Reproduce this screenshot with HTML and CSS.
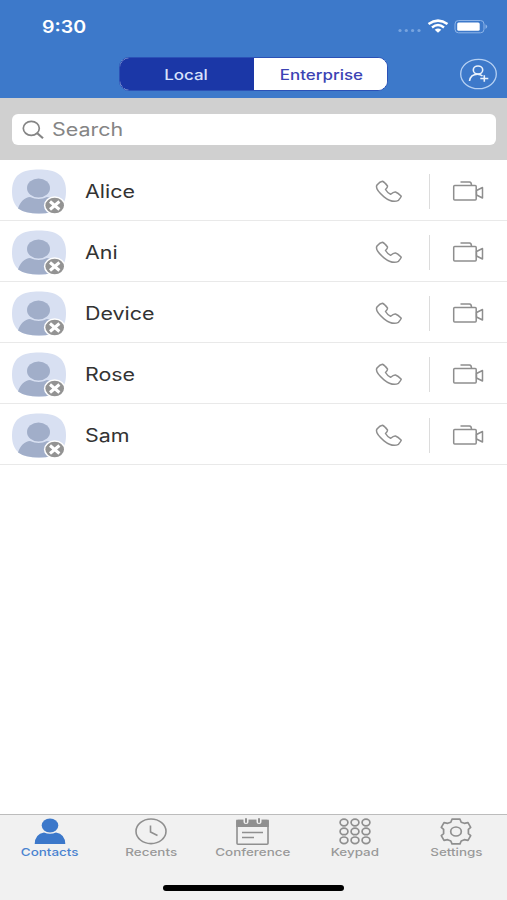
FILE: index.html
```html
<!DOCTYPE html>
<html lang="en">
<head>
<meta charset="utf-8">
<title>Contacts</title>
<link rel="stylesheet" href="styles.css">
</head>
<body>
<svg class="defs" width="0" height="0" aria-hidden="true">
  <symbol id="avatar" viewBox="0 0 56 46">
    <path d="M27 .5C43 .5 54 5 54 22.500S43 44.500 27 44.500S0 40 0 22.500S11 .5 27 .5Z" fill="#d8e0f2"/>
    <ellipse cx="26.500" cy="19" rx="11.500" ry="9.500" fill="#a1aec9"/>
    <path d="M6 39.500C8 33 13 28 18 28Q27 32 35 28Q43 29 48 39Q41 44.500 27 44.500T6 39.500Z" fill="#a1aec9"/>
    <ellipse cx="42.700" cy="36.500" rx="10.800" ry="9.300" fill="#fff"/>
    <ellipse cx="42.700" cy="36.500" rx="9.300" ry="7.800" fill="#939393"/>
    <path d="M38 32.500l9.400 8M47.400 32.500l-9.400 8" stroke="#fff" stroke-width="3"/>
  </symbol>
  <symbol id="phone" viewBox="0 0 28 24">
    <path d="M2 5Q5 1.500 7.500 1.300Q9.500 2 12.500 6Q12.700 7.500 10.500 9.500Q12 12.300 15.700 14.300Q18.500 11.700 20.500 12Q23 12.800 26.300 16.200Q26 17.500 23.500 20.300Q17.500 23.500 9 16.800Q-.5 9 2 5Z" fill="none" stroke="#8e8e8e" stroke-width="1.500" stroke-linejoin="round"/>
  </symbol>
  <symbol id="video" viewBox="0 0 32 22">
    <g fill="none" stroke="#8e8e8e" stroke-width="1.500" stroke-linejoin="round">
      <rect x="1.700" y="4.500" width="22.500" height="14.500" rx="1"/>
      <path d="M8.500 1H17.500Q19.500 1 19.500 4.500M24.500 9.500L30.500 6.500V17L24.500 14Z"/>
    </g>
  </symbol>
</svg>
<div class="screen">
  <header class="header">
    <div class="status">
      <span class="time wide">9:30</span>
      <svg class="status-icons" width="94" height="18" viewBox="0 0 94 18">
        <g fill="#78a4df"><circle cx="5" cy="12.500" r="1.600"/><circle cx="11.300" cy="12.500" r="1.600"/><circle cx="17.600" cy="12.500" r="1.600"/><circle cx="24" cy="12.500" r="1.600"/></g>
        <g fill="none" stroke="#fff" stroke-width="2.500"><path d="M33.500 6Q43 -.8 52.500 6M37 9.400Q43 4.700 49 9.400"/></g>
        <path d="M39.700 11.700Q43 9.200 46.300 11.700L43 14.700Z" fill="#fff"/>
        <rect x="60" y="2.500" width="29" height="12.300" rx="3.500" fill="none" stroke="#8db4e8"/>
        <rect x="62.200" y="4.500" width="22.500" height="8.200" rx="1.500" fill="#fff"/>
        <path d="M90.500 6.300q3.500 2.300 0 4.600z" fill="#8db4e8"/>
      </svg>
    </div>
    <div class="toolbar">
      <div class="segments">
        <button class="segment selected"><span class="wide">Local</span></button>
        <button class="segment"><span class="wide">Enterprise</span></button>
      </div>
      <svg class="add" width="38" height="32" viewBox="0 0 38 32">
        <g fill="none" stroke="#b5d0f3" stroke-width="1.300"><ellipse cx="19.500" cy="16" rx="17.800" ry="14.700"/></g>
        <g fill="none" stroke="#eaf2fc" stroke-width="1.600"><ellipse cx="19" cy="12" rx="4.700" ry="4"/><path d="M10.500 23Q11.500 16.300 18.500 16.300Q21.500 16.300 23.500 18M25.300 17.200v6.600M21.300 20.500h8"/></g>
      </svg>
    </div>
  </header>
  <div class="search-bar">
    <div class="search-box">
      <svg width="24" height="20" viewBox="0 0 24 20" fill="none" stroke="#858585" stroke-width="1.700"><ellipse cx="9.300" cy="8.300" rx="8" ry="7"/><path d="M15 13l6 5.300" stroke-width="2.200"/></svg>
      <span class="wide">Search</span>
    </div>
  </div>
  <main class="contacts">
    <div class="contact"><svg class="avatar"><use href="#avatar"/></svg><span class="name wide">Alice</span><svg class="phone"><use href="#phone"/></svg><i class="rule"></i><svg class="video"><use href="#video"/></svg></div>
    <div class="contact"><svg class="avatar"><use href="#avatar"/></svg><span class="name wide">Ani</span><svg class="phone"><use href="#phone"/></svg><i class="rule"></i><svg class="video"><use href="#video"/></svg></div>
    <div class="contact"><svg class="avatar"><use href="#avatar"/></svg><span class="name wide">Device</span><svg class="phone"><use href="#phone"/></svg><i class="rule"></i><svg class="video"><use href="#video"/></svg></div>
    <div class="contact"><svg class="avatar"><use href="#avatar"/></svg><span class="name wide">Rose</span><svg class="phone"><use href="#phone"/></svg><i class="rule"></i><svg class="video"><use href="#video"/></svg></div>
    <div class="contact"><svg class="avatar"><use href="#avatar"/></svg><span class="name wide">Sam</span><svg class="phone"><use href="#phone"/></svg><i class="rule"></i><svg class="video"><use href="#video"/></svg></div>
  </main>
  <footer class="footer">
    <nav class="tabs">
      <div class="tab active">
        <svg width="36" height="30" viewBox="0 0 36 30"><ellipse cx="18" cy="8.500" rx="8.300" ry="7" fill="#3c78ca"/><path d="M2.700 27Q3 17 12 15.500Q18 18 24 15.500Q33 17 33.300 27Z" fill="#3c78ca"/></svg>
        <span class="wide">Contacts</span>
      </div>
      <div class="tab">
        <svg width="36" height="30" viewBox="0 0 36 30" fill="none" stroke="#8f8f8f" stroke-width="1.600"><ellipse cx="18" cy="14.300" rx="15" ry="12.300"/><path d="M17.500 8.500V15L24.500 18.500"/></svg>
        <span class="wide">Recents</span>
      </div>
      <div class="tab">
        <svg width="36" height="30" viewBox="0 0 36 30" fill="none" stroke="#8f8f8f" stroke-width="1.600"><rect x="2" y="3.500" width="31" height="23.700" rx="1"/><path d="M1.200 2.700h32.600v7.300H1.200z" fill="#8f8f8f" stroke="none"/><g stroke-linecap="round"><path d="M11 2v2.500M24 2v2.500" stroke="#f1f1f1" stroke-width="5"/><path d="M11 2v3M24 2v3" stroke-width="2"/></g><path d="M7 15.500h21M7 20.500h12"/></svg>
        <span class="wide">Conference</span>
      </div>
      <div class="tab">
        <svg width="36" height="30" viewBox="0 0 36 30" fill="none" stroke="#8f8f8f" stroke-width="1.700"><g id="keys"><ellipse cx="7" cy="5.500" rx="3.900" ry="3.300"/><ellipse cx="18" cy="5.500" rx="3.900" ry="3.300"/><ellipse cx="29" cy="5.500" rx="3.900" ry="3.300"/></g><use href="#keys" y="8.900"/><use href="#keys" y="17.800"/></svg>
        <span class="wide">Keypad</span>
      </div>
      <div class="tab">
        <svg width="36" height="30" viewBox="0 0 36 30" fill="none" stroke="#8f8f8f" stroke-width="1.700" stroke-linejoin="round"><path d="M14 2.200H22L23.200 5.200L26.300 6.300L30 5.600L32.700 10.300L30.400 12.300V16.700L32.700 18.700L30 23.400L26.300 22.700L23.200 24L22 26.800H14L12.800 24L9.700 22.700L6 23.400L3.300 18.700L5.600 16.700V12.300L3.300 10.300L6 5.600L9.700 6.300L12.800 5.200Z"/><ellipse cx="18" cy="14.500" rx="5.300" ry="4.500"/></svg>
        <span class="wide">Settings</span>
      </div>
    </nav>
    <div class="home"></div>
  </footer>
</div>
</body>
</html>
```
FILE: styles.css
```css
* { box-sizing: border-box; }
body { margin: 0; font-family: Inter, "Liberation Sans", sans-serif; background: #fff; }
.defs { position: absolute; }
.screen { width: 507px; height: 900px; display: flex; flex-direction: column; overflow: hidden; }
.wide { display: inline-block; transform: scaleX(1.19); }
svg { display: block; flex: none; }

.header { height: 98px; background: #3d79ca; }
.status { height: 54px; padding: 0 18px 0 42px; display: flex; align-items: center; justify-content: space-between; }
.time { color: #fff; font-size: 17px; font-weight: 600; transform: scaleX(1.15); transform-origin: left; }
.toolbar { height: 40px; padding: 0 10px 0 119px; display: flex; align-items: center; justify-content: space-between; }
.segments { display: flex; width: 269px; height: 34px; border: 1px solid #2b51b6; border-radius: 10px; overflow: hidden; background: #fff; }
.segment { flex: 1; padding: 0 0 0 2px; border: 0; background: #fff; color: #3c43b4; font: 500 14px Inter, sans-serif; }
.segment .wide { transform: scaleX(1.21); }
.segment.selected { padding: 0 2px 0 0; background: #1b37a7; color: #d9e2fb; }

.search-bar { height: 62px; padding: 16px 11px 15px 12px; background: #d0d0d0; }
.search-box { height: 31px; padding-left: 10px; display: flex; align-items: center; gap: 6px; border-radius: 6px; background: #fff; color: #858585; font-size: 18px; }
.search-box .wide { transform-origin: left; }

.contacts { flex: 1; }
.contact { height: 61px; padding: 3px 23px 0 12px; display: flex; align-items: center; border-bottom: 1px solid #e9e9e9; }
.avatar { width: 56px; height: 46px; }
.name { margin-left: 17px; margin-right: auto; color: #333; font-size: 18px; transform-origin: left; }
.phone { width: 28px; height: 24px; }
.rule { width: 1px; height: 35px; margin: 0 22px 0 26px; background: #dcdcdc; }
.video { width: 32px; height: 22px; }

.footer { height: 86px; border-top: 1px solid #bcbcbc; background: #f1f1f1; }
.tabs { display: flex; height: 46px; margin: 0 0 0 -1px; }
.tab { flex: 1; display: flex; flex-direction: column; align-items: center; padding-top: 2px; color: #999; font-size: 11px; font-weight: 500; line-height: 11px; }
.tab .wide { transform: scaleX(1.22); }
.tab.active { color: #4a83d0; }
.home { width: 181px; height: 6px; margin: 24px auto 0; border-radius: 3px; background: #000; }
```
